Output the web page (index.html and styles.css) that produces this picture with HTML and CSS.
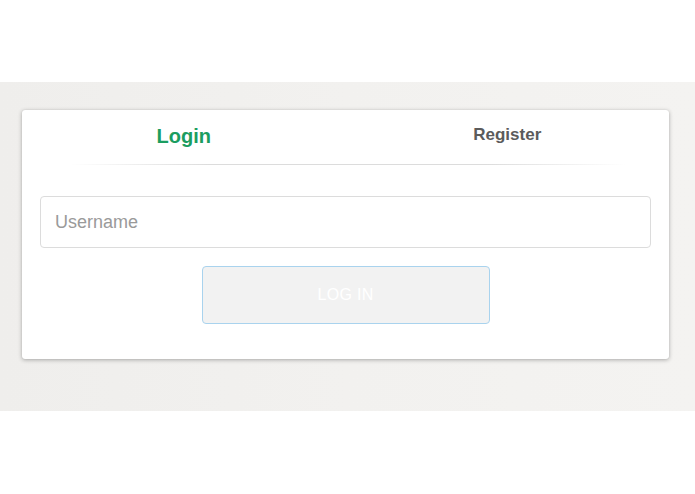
FILE: index.html
```html
<!DOCTYPE html>
<html>
<head>
<meta charset="utf-8">
<link rel="stylesheet" href="styles.css">
</head>
<body>
<div class="band">
  <div class="card">
    <div class="tabs">
      <div class="tab tab-active">Login</div>
      <div class="tab tab-other">Register</div>
    </div>
    <div class="divider"></div>
    <form class="form">
      <input class="field" type="text" placeholder="Username">
      <button class="btn" type="button">LOG IN</button>
    </form>
  </div>
</div>
</body>
</html>
```

FILE: styles.css
```css
html, body {
  margin: 0;
  padding: 0;
  background: #ffffff;
  font-family: "Liberation Sans", Arial, sans-serif;
}
.band {
  margin-top: 82px;
  height: 329px;
  box-sizing: border-box;
  padding: 28px 26px 0 22px;
  background: linear-gradient(90deg, #efeeec 0%, #f2f1ef 50%, #f4f3f1 100%);
}
.card {
  background: #ffffff;
  border-radius: 3px;
  box-shadow: 0 1px 4px rgba(0,0,0,0.3), 0 0 1px rgba(0,0,0,0.15);
  height: 249px;
  box-sizing: border-box;
  display: flex;
  flex-direction: column;
}
.tabs {
  display: flex;
  height: 54px;
}
.tab {
  flex: 1;
  text-align: center;
  font-weight: bold;
  line-height: 24px;
}
.tab-active {
  color: #1b9d60;
  font-size: 20px;
  padding-top: 14px;
}
.tab-other {
  color: #5b5b5b;
  font-size: 17px;
  padding-top: 13px;
}
.divider {
  height: 1px;
  margin: 0 44px 0 48px;
  background: linear-gradient(90deg, rgba(220,220,220,0) 0%, #dcdcdc 25%, #dcdcdc 75%, rgba(220,220,220,0) 100%);
}
.form {
  display: flex;
  flex-direction: column;
  align-items: center;
  padding: 31px 18px 0 18px;
  margin: 0;
}
.field {
  width: 100%;
  height: 52px;
  box-sizing: border-box;
  border: 1px solid #dcdcdc;
  border-radius: 4px;
  padding: 0 14px;
  font-family: "Liberation Sans", Arial, sans-serif;
  font-size: 18px;
  color: #333;
  outline: none;
}
.field::placeholder {
  color: #9a9a9a;
}
.btn {
  margin-top: 18px;
  width: 288px;
  height: 58px;
  box-sizing: border-box;
  background: #f2f2f2;
  border: 1px solid #a9d3ee;
  border-radius: 4px;
  color: #ffffff;
  font-family: "Liberation Sans", Arial, sans-serif;
  font-size: 16px;
  letter-spacing: 0.3px;
}
```
